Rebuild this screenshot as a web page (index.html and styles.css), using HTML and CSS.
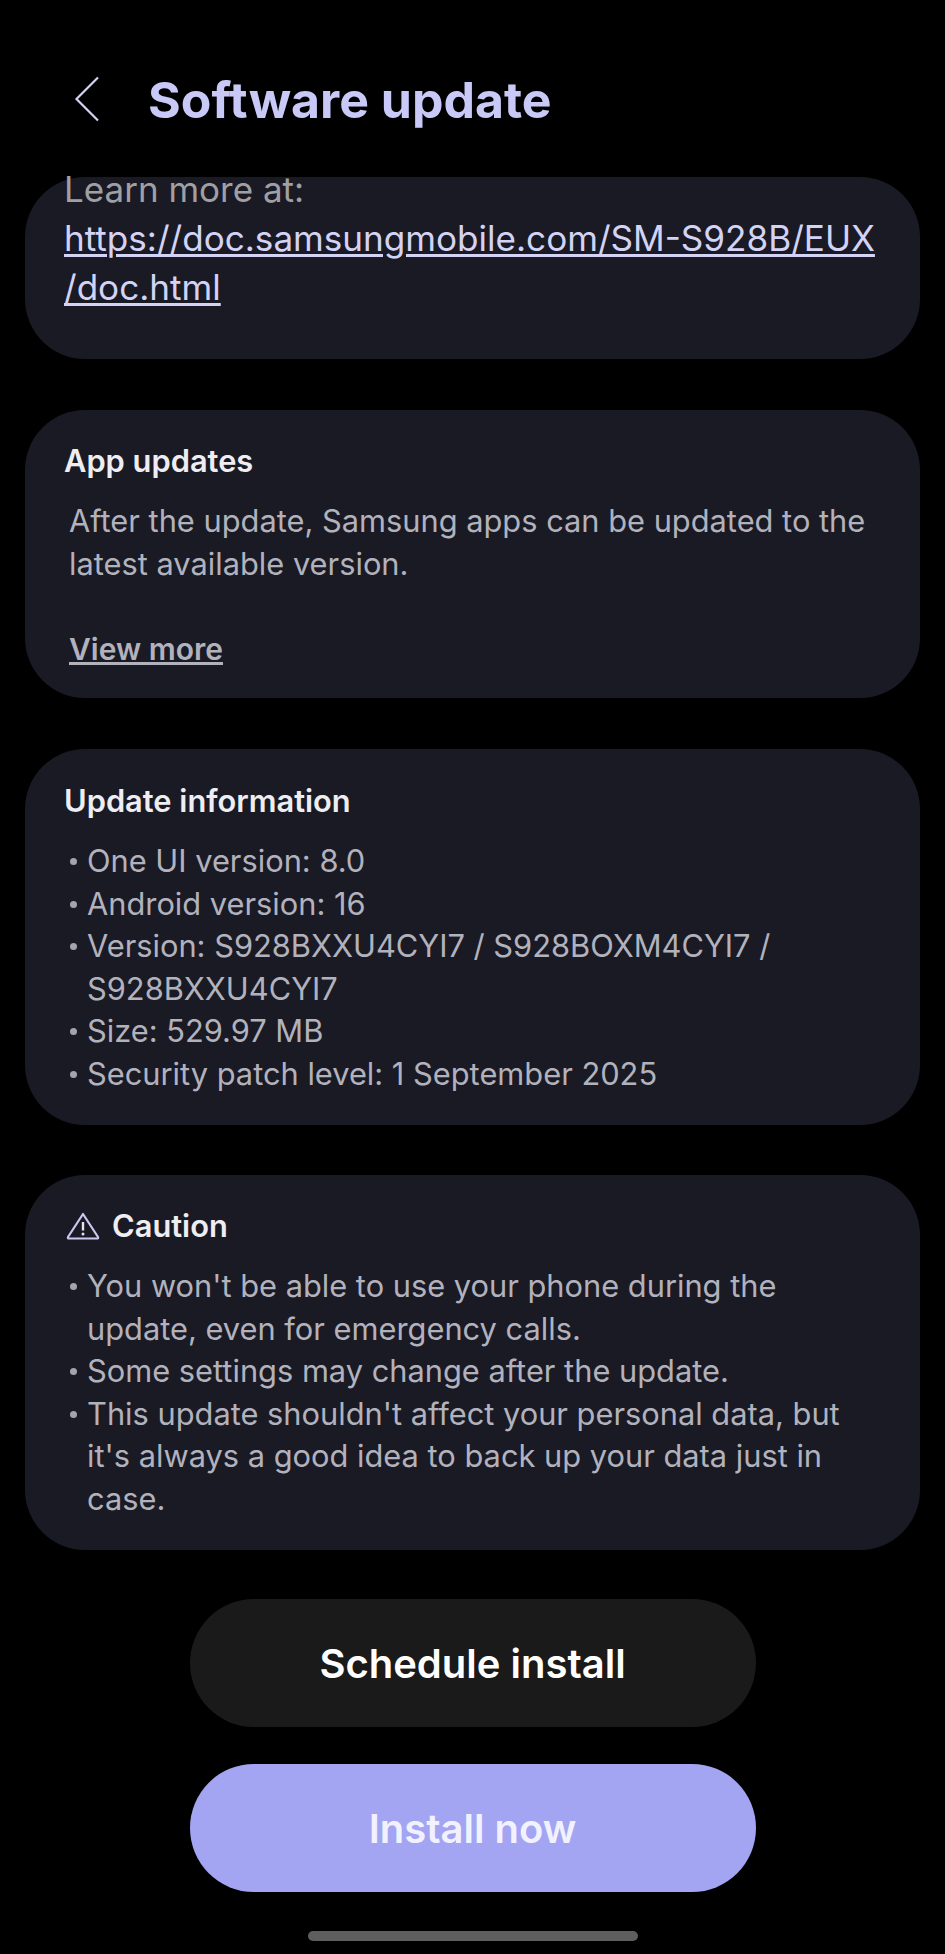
FILE: index.html
```html
<!DOCTYPE html>
<html lang="en">
<head>
    <meta charset="UTF-8">
    <meta name="viewport" content="width=device-width, initial-scale=1.0">
    <title>Software update</title>
    <link rel="stylesheet" href="styles.css">
</head>
<body>
    <div class="screen">
        <header class="top-bar">
            <svg class="back-icon" viewBox="0 0 26 46" width="26" height="46" aria-hidden="true">
                <path d="M24 1.500 L2.500 23 L24 44.500" fill="none" stroke="#d2d2f2" stroke-width="2.200"/>
            </svg>
            <h1>Software update</h1>
        </header>

        <section class="card card-link">
            <p class="link-lead">Learn more at:</p>
            <p class="link-text"><a href="#">https://doc.samsungmobile.com/SM-S928B/EUX<br>/doc.html</a></p>
        </section>

        <section class="card card-apps">
            <h2>App updates</h2>
            <p class="body-text indent">After the update, Samsung apps can be updated to the latest available version.</p>
            <a class="view-more" href="#">View more</a>
        </section>

        <section class="card card-info">
            <h2>Update information</h2>
            <ul class="body-text bullets">
                <li>One UI version: 8.0</li>
                <li>Android version: 16</li>
                <li>Version: S928BXXU4CYI7 / S928BOXM4CYI7 / S928BXXU4CYI7</li>
                <li>Size: 529.97 MB</li>
                <li>Security patch level: 1 September 2025</li>
            </ul>
        </section>

        <section class="card card-caution">
            <h2 class="caution-title">
                <svg class="caution-icon" viewBox="0 0 34 28" width="34" height="28" aria-hidden="true">
                    <path d="M17 2 L32 25 Q32.500 26.500 31 26.500 L3 26.500 Q1.500 26.500 2 25 Z" fill="none" stroke="#c9c9f0" stroke-width="2.200" stroke-linejoin="round"/>
                    <path d="M17 10 V18.500" stroke="#e4e4f0" stroke-width="2.400"/>
                    <circle cx="17" cy="22" r="1.500" fill="#e4e4f0"/>
                </svg>
                Caution
            </h2>
            <ul class="body-text bullets">
                <li>You won't be able to use your phone during the update, even for emergency calls.</li>
                <li>Some settings may change after the update.</li>
                <li>This update shouldn't affect your personal data, but it's always a good idea to back up your data just in case.</li>
            </ul>
        </section>

        <div class="actions">
            <button type="button" class="pill pill-dark">Schedule install</button>
            <button type="button" class="pill pill-primary">Install now</button>
        </div>

        <div class="home-bar"></div>
    </div>
</body>
</html>
```

FILE: styles.css
```css
* {
    margin: 0;
    padding: 0;
    box-sizing: border-box;
}

body {
    width: 945px;
    height: 1954px;
    background-color: #000;
    font-family: Inter, "Noto Sans", sans-serif;
    overflow: hidden;
}

.screen {
    padding: 0 25px;
}

.top-bar {
    display: flex;
    align-items: center;
    height: 177px;
    padding: 20px 0 0 49px;
}

.back-icon {
    flex: none;
}

h1 {
    margin-left: 48px;
    margin-top: 2px;
    font-size: 50px;
    font-weight: 700;
    color: #c9c9f7;
}

.card {
    margin-bottom: 51px;
    padding: 0 39px;
    background-color: #1a1a25;
    border-radius: 60px;
}

.card-link {
    height: 182px;
}

.card-apps {
    height: 288px;
    padding-top: 30px;
}

.card-info {
    height: 376px;
    margin-bottom: 50px;
    padding-top: 31px;
}

.card-caution {
    height: 375px;
    padding-top: 30px;
}

h2 {
    font-size: 30.800px;
    line-height: 42px;
    font-weight: 600;
    color: #ededf2;
}

.body-text {
    font-size: 30.800px;
    line-height: 42.600px;
    color: #b2b2bd;
}

.link-lead {
    font-size: 35px;
    line-height: 25px;
    color: #a0a0a4;
}

.link-text {
    margin-top: 12px;
    font-size: 35.100px;
    line-height: 48.500px;
}

.link-text a {
    color: #d3d3f5;
    text-decoration-thickness: 3px;
    text-underline-offset: 3px;
}

.indent {
    margin-top: 18px;
    padding-left: 5px;
}

.view-more {
    display: inline-block;
    margin-top: 43px;
    padding-left: 5px;
    font-size: 30px;
    line-height: 42px;
    font-weight: 600;
    color: #b2b2bd;
}

.bullets {
    margin-top: 18px;
    list-style: none;
}

.bullets li {
    position: relative;
    padding-left: 23px;
}

.bullets li::before {
    content: "";
    position: absolute;
    left: 6px;
    top: 18px;
    width: 7px;
    height: 7px;
    border-radius: 50%;
    background-color: #a4a4ac;
}

.caution-title {
    display: flex;
    align-items: center;
    gap: 12px;
}

.caution-icon {
    flex: none;
    margin-left: 2px;
}

.actions {
    display: flex;
    flex-direction: column;
    align-items: center;
    gap: 37px;
    margin-top: -2px;
}

.pill {
    width: 566px;
    height: 128px;
    border: none;
    border-radius: 64px;
    font-family: inherit;
    font-size: 40px;
    font-weight: 600;
}

.pill-dark {
    background-color: #1a1a1a;
    color: #fff;
}

.pill-primary {
    background-color: #a3a5f3;
    color: #f2f2fe;
}

.home-bar {
    width: 330px;
    height: 10px;
    margin: 39px auto 0;
    border-radius: 5px;
    background-color: #5e5e5e;
}
```
